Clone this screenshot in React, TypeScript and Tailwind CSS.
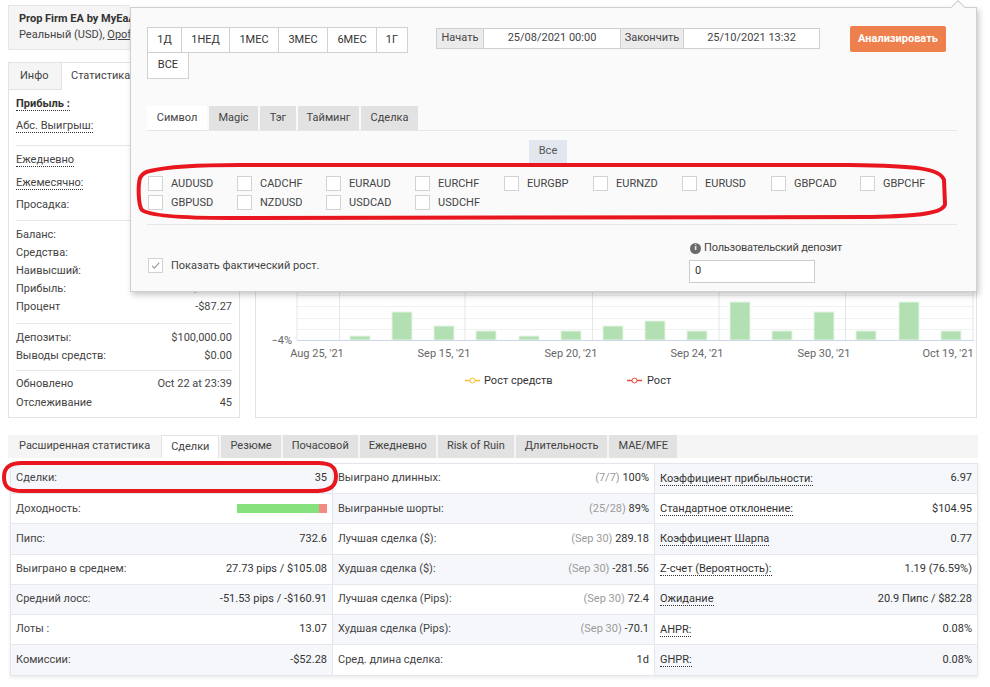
import React from 'react';

// Statistics page with the "analyze period" popup opened over it

const periodsTop = [
    { label: '1Д', w: 'w-[35px]' },
    { label: '1НЕД', w: 'w-[49px]' },
    { label: '1МЕС', w: 'w-[50px]' },
    { label: '3МЕС', w: 'w-[50px]' },
    { label: '6МЕС', w: 'w-[50px]' },
    { label: '1Г', w: 'w-[32px]' },
];

const popupTabs = [
    { label: 'Символ', w: 'w-[60px]', active: true },
    { label: 'Magic', w: 'w-[49px]' },
    { label: 'Тэг', w: 'w-[36px]' },
    { label: 'Тайминг', w: 'w-[61px]' },
    { label: 'Сделка', w: 'w-[57px]' },
];

const symbols = [
    'AUDUSD', 'CADCHF', 'EURAUD', 'EURCHF', 'EURGBP', 'EURNZD', 'EURUSD', 'GBPCAD', 'GBPCHF',
    'GBPUSD', 'NZDUSD', 'USDCAD', 'USDCHF',
];

// [x, top] of each bar in page coordinates, baseline at 340
const bars = [
    [350, 336], [392, 312], [434, 326], [476, 331], [519, 336], [561, 331], [603, 326], [645, 321],
    [687, 331], [730, 302], [772, 331], [814, 312], [856, 331], [899, 302], [941, 331],
];

const xLabels = [
    { x: 317, t: "Aug 25, '21" },
    { x: 444, t: "Sep 15, '21" },
    { x: 571, t: "Sep 20, '21" },
    { x: 697, t: "Sep 24, '21" },
    { x: 824, t: "Sep 30, '21" },
    { x: 948, t: "Oct 19, '21" },
];

const bottomTabs = ['Расширенная статистика', 'Сделки', 'Резюме', 'Почасовой', 'Ежедневно', 'Risk of Ruin', 'Длительность', 'MAE/MFE'];

type Cell = { label: string; value?: React.ReactNode; note?: string };

const col1: Cell[] = [
    { label: 'Сделки:', value: '35' },
    { label: 'Доходность:' },
    { label: 'Пипс:', value: '732.6' },
    { label: 'Выиграно в среднем:', value: '27.73 pips / $105.08' },
    { label: 'Средний лосс:', value: '-51.53 pips / -$160.91' },
    { label: 'Лоты :', value: '13.07' },
    { label: 'Комиссии:', value: '-$52.28' },
];

const col2: Cell[] = [
    { label: 'Выиграно длинных:', note: '(7/7)', value: '100%' },
    { label: 'Выигранные шорты:', note: '(25/28)', value: '89%' },
    { label: 'Лучшая сделка ($):', note: '(Sep 30)', value: '289.18' },
    { label: 'Худшая сделка ($):', note: '(Sep 30)', value: '-281.56' },
    { label: 'Лучшая сделка (Pips):', note: '(Sep 30)', value: '72.4' },
    { label: 'Худшая сделка (Pips):', note: '(Sep 30)', value: '-70.1' },
    { label: 'Сред. длина сделка:', value: '1d' },
];

const col3: Cell[] = [
    { label: 'Коэффициент прибыльности:', value: '6.97' },
    { label: 'Стандартное отклонение:', value: '$104.95' },
    { label: 'Коэффициент Шарпа', value: '0.77' },
    { label: 'Z-счет (Вероятность):', value: '1.19 (76.59%)' },
    { label: 'Ожидание', value: '20.9 Пипс / $82.28' },
    { label: 'AHPR:', value: '0.08%' },
    { label: 'GHPR:', value: '0.08%' },
];

const Dotted = ({ children, bold }: { children: React.ReactNode; bold?: boolean }) => (
    <span className={`border-b border-dotted border-[#333] leading-[13px] ${bold ? 'font-bold text-[#333]' : ''}`}>{children}</span>
);

const StatRow = ({ label, value, h, dotted, bold, green }: { label: string; value?: string; h: string; dotted?: boolean; bold?: boolean; green?: boolean }) => (
    <div className={`flex items-center justify-between ${h}`}>
        {dotted ? <Dotted bold={bold}>{label}</Dotted> : <span>{label}</span>}
        {value && <span className={green ? 'text-[#3aa655]' : ''}>{value}</span>}
    </div>
);

const LeftPanel = () => (
    <div className="w-[232px] h-[356px] border border-[#e3e3e3] bg-white">
        <div className="flex h-[27px] bg-[#f5f5f5]">
            <div className="w-[52px] pl-[11px] flex items-center border-b border-[#e3e3e3] text-[#444]">Инфо</div>
            <div className="w-[72px] pl-[9px] flex items-center bg-white border-x border-[#e3e3e3] text-[#444]">Статистика</div>
            <div className="flex-1 border-b border-[#e3e3e3]" />
        </div>
        <div className="px-[7px] text-[#444]">
            <div className="pt-[3px] pb-[8px] border-b border-[#e6e6e6]">
                <StatRow h="h-[22px]" label="Прибыль :" dotted bold />
                <StatRow h="h-[22px]" label="Абс. Выигрыш:" dotted />
            </div>
            <div className="pt-[2px] pb-[3px] border-b border-[#e6e6e6]">
                <StatRow h="h-[23px]" label="Ежедневно" dotted />
                <StatRow h="h-[23px]" label="Ежемесячно:" dotted />
                <StatRow h="h-[23px]" label="Просадка:" />
            </div>
            <div className="pt-[5px] pb-[7px] border-b border-[#e6e6e6]">
                <StatRow h="h-[18px]" label="Баланс:" />
                <StatRow h="h-[18px]" label="Средства:" />
                <StatRow h="h-[18px]" label="Наивысший:" />
                <StatRow h="h-[18px]" label="Прибыль:" value="$287.87" green />
                <StatRow h="h-[18px]" label="Процент" value="-$87.27" />
            </div>
            <div className="pt-[5px] pb-[5px] border-b border-[#e6e6e6]">
                <StatRow h="h-[18px]" label="Депозиты:" value="$100,000.00" />
                <StatRow h="h-[18px]" label="Выводы средств:" value="$0.00" />
            </div>
            <div className="pt-[4px]">
                <StatRow h="h-[19px]" label="Обновлено" value="Oct 22 at 23:39" />
                <StatRow h="h-[19px]" label="Отслеживание" value="45" />
            </div>
        </div>
    </div>
);

const ChartPanel = () => (
    <div className="ml-[15px] w-[722px] h-[356px] border border-[#e3e3e3] bg-white">
        <svg width="720" height="354" viewBox="256 63 720 354" fontFamily="Roboto, sans-serif">
            {[295, 306, 318, 329].map((y) => (
                <line key={y} x1="297" x2="974" y1={y + 0.5} y2={y + 0.5} stroke="#f1f1f1" />
            ))}
            {[297, 339.5, 465, 592.5, 719, 845.5, 973].map((x) => (
                <line key={x} x1={x} x2={x} y1="90" y2="340" stroke="#e6e6e6" />
            ))}
            {bars.map(([x, top]) => (
                <rect key={x} x={x} y={top} width="20" height={340 - top} fill="#b3e0b3" stroke="#e4f4e4" strokeWidth="1" />
            ))}
            <line x1="297" x2="974" y1="340.5" y2="340.5" stroke="#ccd6eb" />
            <text x="292" y="344" textAnchor="end" fontSize="11" fill="#666">−4%</text>
            {xLabels.map(({ x, t }) => (
                <text key={t} x={x} y="357" textAnchor="middle" fontSize="11" fill="#666">{t}</text>
            ))}
            {/* legend */}
            <line x1="465" x2="480" y1="380.5" y2="380.5" stroke="#f5c02c" strokeWidth="1.5" />
            <circle cx="472.5" cy="380.5" r="2.5" fill="#fff" stroke="#f5c02c" />
            <text x="484" y="384" fontSize="11" fill="#333">Рост средств</text>
            <line x1="627" x2="642" y1="380.5" y2="380.5" stroke="#e5483b" strokeWidth="1.5" />
            <circle cx="634.5" cy="380.5" r="2.5" fill="#fff" stroke="#e5483b" />
            <text x="647" y="384" fontSize="11" fill="#333">Рост</text>
        </svg>
    </div>
);

const Checkbox = ({ checked }: { checked?: boolean }) => (
    <div className="w-[15px] h-[15px] shrink-0 border border-[#d2d2d2] bg-white flex items-center justify-center">
        {checked && (
            <svg width="11" height="11" viewBox="0 0 11 11">
                <path d="M2 5.8 L4.4 8.2 L9.2 2.6" fill="none" stroke="#9a9a9a" strokeWidth="1.1" />
            </svg>
        )}
    </div>
);

const Popup = () => (
    <div className="absolute left-[130px] top-[7px] w-[847px] h-[285px] border border-[#cfcfcf] bg-[#fafafa] shadow-[2px_3px_6px_rgba(0,0,0,0.22)] pl-[16px] pt-[19px] text-[#333]">
        <div className="absolute -top-[6px] right-[13px] w-[10px] h-[10px] rotate-45 border-l border-t border-[#cfcfcf] bg-[#fafafa]" />
        <div className="flex items-start">
            <div className="w-[289px]">
                <div className="flex">
                    {periodsTop.map((p, i) => (
                        <div key={p.label} className={`${p.w} ${i ? '-ml-px' : ''} h-[26px] border border-[#d0d0d0] bg-white flex items-center justify-center`}>{p.label}</div>
                    ))}
                </div>
                <div className="-mt-px w-[42px] h-[27px] border border-[#d0d0d0] bg-white flex items-center justify-center">ВСЕ</div>
            </div>
            <div className="mt-[1px] flex h-[21px]">
                <div className="w-[48px] border border-[#cfcfcf] bg-[#ebebeb] flex items-center justify-center text-[#444]">Начать</div>
                <div className="-ml-px w-[138px] border border-[#cfcfcf] bg-white flex items-center justify-center text-[#444]">25/08/2021 00:00</div>
                <div className="-ml-px w-[64px] border border-[#cfcfcf] bg-[#ebebeb] flex items-center justify-center text-[#444]">Закончить</div>
                <div className="-ml-px w-[137px] border border-[#cfcfcf] bg-white flex items-center justify-center text-[#444]">25/10/2021 13:32</div>
            </div>
            <div className="ml-[30px] -mt-px w-[96px] h-[26px] rounded-[2px] bg-[#ee804e] text-white font-bold flex items-center justify-center">Анализировать</div>
        </div>

        <div className="mt-[27px] w-[810px] flex gap-[2px] border-b border-[#e6e6e6]">
            {popupTabs.map((t) => (
                <div key={t.label} className={`${t.w} h-[24px] flex items-center justify-center text-[#444] ${t.active ? 'bg-white' : 'bg-[#e2e2e2]'}`}>{t.label}</div>
            ))}
        </div>

        <div className="mt-[9px] ml-[382px] w-[38px] h-[23px] bg-[#e2e6ee] text-[#555] flex items-center justify-center">Все</div>

        <div className="mt-[13px] ml-[1px] grid grid-cols-[repeat(9,89px)]">
            {symbols.map((s) => (
                <div key={s} className="h-[19px] flex items-start">
                    <Checkbox />
                    <span className="ml-[8px] leading-[15px] text-[#444]">{s}</span>
                </div>
            ))}
        </div>

        <div className="mt-[10px] w-[810px] border-t border-[#e6e6e6]" />

        <div className="mt-[16px] flex">
            <div className="w-[542px] pt-[7px] pl-[1px] flex items-center">
                <Checkbox checked />
                <span className="ml-[8px] leading-[15px] text-[#444]">Показать фактический рост.</span>
            </div>
            <div className="flex flex-col">
                <div className="h-[14px] flex items-center">
                    <div className="ml-[1px] w-[11px] h-[11px] rounded-full bg-[#6b6b6b] text-white text-[8px] font-bold leading-none flex items-center justify-center">i</div>
                    <span className="ml-[3px] text-[#444] tracking-[-0.2px]">Пользовательский депозит</span>
                </div>
                <div className="mt-[5px] w-[126px] h-[23px] border border-[#cccccc] bg-white pl-[5px] flex items-center">0</div>
            </div>
        </div>
    </div>
);

const TableColumn = ({ rows, stripeOdd, dotted, border }: { rows: Cell[]; stripeOdd: boolean; dotted?: boolean; border?: boolean }) => (
    <div className={border ? 'border-r border-[#e3e6ec]' : ''}>
        {rows.map((r, i) => {
            const striped = stripeOdd ? i % 2 === 0 : i % 2 === 1;
            return (
                <div key={r.label} className={`h-[30.2px] px-[5px] flex items-center justify-between ${i < rows.length - 1 ? 'border-b border-[#e6e8ee]' : ''} ${striped ? 'bg-[#f6f7fa]' : 'bg-white'}`}>
                    {dotted ? <Dotted>{r.label}</Dotted> : <span className="text-[#444]">{r.label}</span>}
                    {r.label === 'Доходность:' ? (
                        <div className="flex h-[9px] w-[90px]">
                            <div className="w-[82px] bg-[#84e17c]" />
                            <div className="flex-1 bg-[#f28b86]" />
                        </div>
                    ) : (
                        <span className="text-[#333]">
                            {r.note && <span className="text-[#9a9a9a]">{r.note} </span>}
                            {r.value}
                        </span>
                    )}
                </div>
            );
        })}
    </div>
);

const BottomCard = () => (
    <div className="mt-[17px]">
        <div className="w-[970px] h-[23px] bg-[#f5f5f5] flex gap-[2px] pl-[2px]">
            {bottomTabs.map((t, i) => (
                <div key={t} className={`px-[9px] flex items-center text-[#444] ${i === 1 ? 'bg-white border-x border-t border-[#e3e3e3]' : i === 0 ? '' : 'bg-[#e2e2e2]'}`}>{t}</div>
            ))}
        </div>
        <div className="mt-[5px] ml-[2px] w-[968px] border border-[#e3e6ec] shadow-[0_2px_4px_rgba(0,0,0,0.08)] grid grid-cols-[322px_322px_1fr]">
            <TableColumn rows={col1} stripeOdd border />
            <TableColumn rows={col2} stripeOdd={false} border />
            <TableColumn rows={col3} stripeOdd dotted />
        </div>
    </div>
);

const Annotations = () => (
    <svg className="absolute left-0 top-0 pointer-events-none" width="990" height="687">
        <path
            d="M150 171 C170 166 200 165 240 165 L850 165 C915 166 940 168 944 180 L945 204 C944 213 920 216 870 217 L230 218 C180 218 150 216 142 210 C138 205 138 185 140 178 C142 174 145 172 150 171 Z"
            fill="none" stroke="#e8161e" strokeWidth="4" strokeLinejoin="round" />
        <path
            d="M22 463 L318 463 C331 463 336 467 336 476 C336 486 331 490 318 491 L22 491 C9 491 4 487 4 477 C4 468 9 463 22 463 Z"
            fill="none" stroke="#e8161e" strokeWidth="4" />
    </svg>
);

const App = () => {
    return (
        <div className="relative w-[990px] h-[687px] overflow-hidden bg-white font-['Roboto',sans-serif] text-[11px] text-[#333]">
            <div className="pl-[8px] pt-[5px]">
                {/* header card runs under the popup; only its left part shows */}
                <div className="w-[122px] h-[45px] overflow-hidden whitespace-nowrap border-l border-y border-[#e6e6e6] bg-[#f5f5f5] px-[10px] pt-[6px]">
                    <div className="font-bold text-[#333] leading-[14px]">Prop Firm EA by MyEaAcademy</div>
                    <div className="mt-[2px] leading-[14px] text-[#444]">
                        Реальный (USD), <span className="underline">Opofinance</span>
                    </div>
                </div>
                <div className="mt-[12px] flex">
                    <LeftPanel />
                    <ChartPanel />
                </div>
                <BottomCard />
            </div>
            <Popup />
            <Annotations />
        </div>
    );
};

export default App;
